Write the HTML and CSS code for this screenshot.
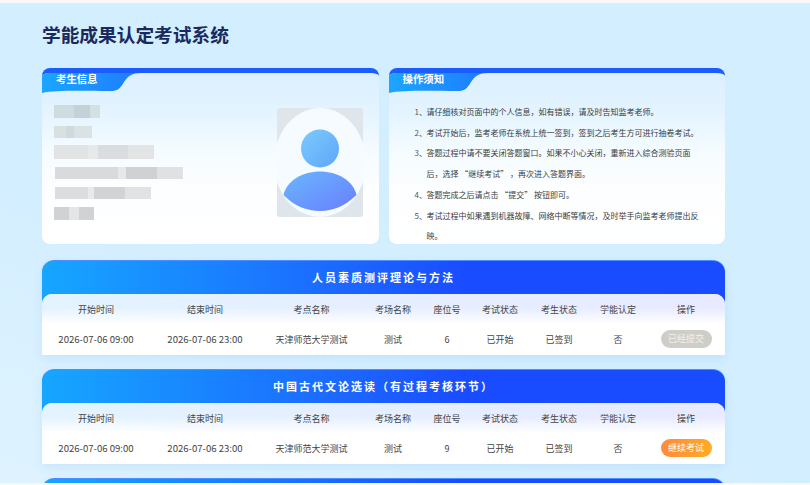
FILE: index.html
```html
<!DOCTYPE html>
<html lang="zh-CN">
<head>
    <meta charset="UTF-8">
    <meta name="viewport" content="width=device-width, initial-scale=1.0">
    <title>学能成果认定考试系统</title>
    <link rel="stylesheet" href="styles.css">
</head>
<body>
    <div class="page">
        <h1 class="page-title">学能成果认定考试系统</h1>

        <div class="info-row">
            <div class="panel">
                <div class="panel-tab">
                    <svg class="tab-shape" width="100" height="26" viewBox="0 0 100 26">
                        <defs>
                            <linearGradient id="tabFill" x1="0" y1="0" x2="1" y2="0">
                                <stop offset="0" stop-color="#1ba6ff"/>
                                <stop offset="1" stop-color="#1e7bff"/>
                            </linearGradient>
                        </defs>
                        <path d="M0 25 V5 H99 C90 5 86 8 82 14 C78 21 75 23 69 23 C40 23 14 22 0 25Z" fill="url(#tabFill)"/>
                    </svg>
                    <span class="tab-text">考生信息</span>
                </div>
                <div class="student-body">
                    <div class="student-lines">
                        <div class="mosaic mosaic-1"></div>
                        <div class="mosaic mosaic-2"></div>
                        <div class="mosaic mosaic-3"></div>
                        <div class="mosaic mosaic-4"></div>
                        <div class="mosaic mosaic-5"></div>
                        <div class="mosaic mosaic-6"></div>
                    </div>
                    <svg class="avatar" width="86" height="109" viewBox="0 0 86 109">
                        <defs>
                            <linearGradient id="headFill" x1="0" y1="0" x2="1" y2="1">
                                <stop offset="0" stop-color="#7ccbff"/>
                                <stop offset="1" stop-color="#5ea6f6"/>
                            </linearGradient>
                            <linearGradient id="bodyFill" x1="0" y1="0" x2="1" y2="1">
                                <stop offset="0" stop-color="#69b8fd"/>
                                <stop offset="1" stop-color="#6a7dff"/>
                            </linearGradient>
                        </defs>
                        <rect width="86" height="109" rx="3" fill="#dfe6eb"/>
                        <ellipse cx="43" cy="54.5" rx="46" ry="54.5" fill="#f5fbff"/>
                        <circle cx="43" cy="40.5" r="19" fill="url(#headFill)"/>
                        <path d="M6.5 87 C10 72 26 63.5 43 63.5 C60 63.5 76 72 79.5 87 C68 98 56 103 43 103 C30 103 17 98 6.5 87Z" fill="url(#bodyFill)"/>
                    </svg>
                </div>
            </div>

            <div class="panel">
                <div class="panel-tab">
                    <svg class="tab-shape" width="100" height="26" viewBox="0 0 100 26">
                        <path d="M0 25 V5 H99 C90 5 86 8 82 14 C78 21 75 23 69 23 C40 23 14 22 0 25Z" fill="url(#tabFill)"/>
                    </svg>
                    <span class="tab-text">操作须知</span>
                </div>
                <ol class="notice-list">
                    <li><span class="notice-num">1、</span><span>请仔细核对页面中的个人信息，如有错误，请及时告知监考老师。</span></li>
                    <li><span class="notice-num">2、</span><span>考试开始后，监考老师在系统上统一签到，签到之后考生方可进行抽卷考试。</span></li>
                    <li><span class="notice-num">3、</span><span>答题过程中请不要关闭答题窗口。如果不小心关闭，重新进入综合测验页面后，选择 “继续考试” ，再次进入答题界面。</span></li>
                    <li><span class="notice-num">4、</span><span>答题完成之后请点击 “提交” 按钮即可。</span></li>
                    <li><span class="notice-num">5、</span><span>考试过程中如果遇到机器故障、网络中断等情况，及时举手向监考老师提出反映。</span></li>
                </ol>
            </div>
        </div>

        <div class="course">
            <div class="course-title">人员素质测评理论与方法</div>
            <table class="course-table">
                <colgroup>
                    <col class="col-a"><col class="col-b"><col class="col-c"><col class="col-d"><col class="col-e"><col class="col-f"><col class="col-g"><col class="col-h"><col class="col-i">
                </colgroup>
                <thead>
                    <tr>
                        <th>开始时间</th><th>结束时间</th><th>考点名称</th><th>考场名称</th><th>座位号</th><th>考试状态</th><th>考生状态</th><th>学能认定</th><th>操作</th>
                    </tr>
                </thead>
                <tbody>
                    <tr>
                        <td class="cell-time">2026-07-06 09:00</td><td class="cell-time">2026-07-06 23:00</td><td>天津师范大学测试</td><td>测试</td><td>6</td><td>已开始</td><td>已签到</td><td>否</td>
                        <td><button class="btn btn-done">已经提交</button></td>
                    </tr>
                </tbody>
            </table>
        </div>

        <div class="course">
            <div class="course-title">中国古代文论选读（有过程考核环节）</div>
            <table class="course-table">
                <colgroup>
                    <col class="col-a"><col class="col-b"><col class="col-c"><col class="col-d"><col class="col-e"><col class="col-f"><col class="col-g"><col class="col-h"><col class="col-i">
                </colgroup>
                <thead>
                    <tr>
                        <th>开始时间</th><th>结束时间</th><th>考点名称</th><th>考场名称</th><th>座位号</th><th>考试状态</th><th>考生状态</th><th>学能认定</th><th>操作</th>
                    </tr>
                </thead>
                <tbody>
                    <tr>
                        <td class="cell-time">2026-07-06 09:00</td><td class="cell-time">2026-07-06 23:00</td><td>天津师范大学测试</td><td>测试</td><td>9</td><td>已开始</td><td>已签到</td><td>否</td>
                        <td><button class="btn btn-go">继续考试</button></td>
                    </tr>
                </tbody>
            </table>
        </div>

        <div class="course course-cut"></div>
    </div>
</body>
</html>
```

FILE: styles.css
```css
*{
    margin: 0;
    padding: 0;
    box-sizing: border-box;
    font-family: "Noto Sans CJK SC", "Liberation Sans", sans-serif;
}
html, body{
    height: 485px;
    overflow: hidden;
}
body{
    background-color: #f8f8f6;
    padding: 3px 0 2px;
}
.page{
    height: 480px;
    overflow: hidden;
    padding: 0 85px 0 42px;
    background: linear-gradient(200deg, #d3eeff 0%, #d3eeff 60%, #dff3ff 100%);
}
.page-title{
    font-size: 18.7px;
    line-height: 26px;
    font-weight: 700;
    color: #1b2a5c;
    margin-top: 18px;
}

/* top two panels */
.info-row{
    display: flex;
    gap: 10px;
    margin-top: 21px;
}
.panel{
    position: relative;
    flex: 1;
    height: 176px;
    border-radius: 8px;
    background: linear-gradient(180deg, #dbefff 0, #e4f4ff 40px, #f5fcff 80px, #fdfeff 120px, #fff 100%);
    border-top: 5px solid #1a5cff;
    overflow: hidden;
}
.panel-tab{
    position: absolute;
    left: 0;
    top: -5px;
    width: 100px;
    height: 26px;
}
.tab-shape{
    display: block;
}
.tab-text{
    position: absolute;
    left: 14px;
    top: 3px;
    font-size: 10.4px;
    line-height: 16px;
    font-weight: 700;
    color: #fff;
}
.student-body{
    display: flex;
    justify-content: space-between;
    padding: 32px 16px 0 12px;
}
.student-lines{
    display: flex;
    flex-direction: column;
    gap: 8px;
}
.avatar{
    display: block;
    margin-top: 3px;
}
.mosaic{
    height: 12px;
}
.mosaic-1{
    width: 46px;
    height: 13px;
    background: linear-gradient(90deg, #cfdcdf 20px, #c3d2d6 20px 36px, #d5e0e3 36px);
}
.mosaic-2{
    width: 38px;
    background: linear-gradient(90deg, #d9e0e2 12px, #cfdadf 12px 20px, #dbe2e4 20px);
}
.mosaic-3{
    width: 100px;
    height: 14px;
    margin-top: -1px;
    background: linear-gradient(90deg, #e1e3e5 34px, #e6e8e9 34px 44px, #dadddf 44px 74px, #e2e4e6 74px);
}
.mosaic-4{
    width: 128px;
    margin-left: 1px;
    background: linear-gradient(90deg, #d9dadc 63px, #e6e8e9 63px 71px, #d0d1d2 71px 102px, #dfe1e3 102px);
}
.mosaic-5{
    width: 96px;
    margin-left: 1px;
    background: linear-gradient(90deg, #dcdddf 33px, #e9eaea 33px 39px, #d2d3d3 39px 70px, #e1e2e4 70px);
}
.mosaic-6{
    width: 40px;
    height: 13px;
    background: linear-gradient(90deg, #d1d2d4 15px, #e4e5e6 15px 25px, #d1d2d4 25px);
}

/* notice list */
.notice-list{
    list-style: none;
    padding: 29px 0 0 26px;
    width: 316px;
    font-size: 8px;
    line-height: 20.7px;
    color: #3a3a3a;
}
.notice-list li{
    display: flex;
}
.notice-num{
    flex: none;
    width: 12px;
    color: #555;
}

/* course cards */
.course{
    margin-top: 14.6px;
    border-radius: 12px 12px 0 0;
    background: linear-gradient(90deg, #16a6ff 0%, #1c66ff 45%, #1a4cff 62%, #1a4cff 100%);
    border-top: 1px solid #4a8fff;
    overflow: hidden;
    box-shadow: 0 4px 10px rgba(90, 160, 230, 0.15);
}
.info-row + .course{
    margin-top: 16px;
}
.course-cut{
    height: 30px;
}
.course-title{
    height: 33px;
    line-height: 33px;
    text-align: center;
    font-size: 11px;
    font-weight: 700;
    letter-spacing: 2px;
    color: #fff;
}
.course-table{
    width: 100%;
    table-layout: fixed;
    border-collapse: separate;
    border-spacing: 0;
    font-size: 9px;
    color: #444;
    background: #fff;
    border-radius: 10px 10px 0 0;
    overflow: hidden;
}
.col-a{ width: 108px; }
.col-b{ width: 110px; }
.col-c{ width: 103px; }
.col-d{ width: 60px; }
.col-e{ width: 48px; }
.col-f{ width: 58px; }
.col-g{ width: 60px; }
.col-h{ width: 58px; }
.col-i{ width: 78px; }
.course-table thead tr{
    background: linear-gradient(180deg, rgba(255, 255, 255, 0) 45%, #fff 100%), linear-gradient(90deg, #e3f3ff, #e8eaff);
}
.course-table th{
    height: 30px;
    font-weight: 400;
    color: #444;
}
.course-table td{
    height: 30.5px;
    text-align: center;
}
.course-table .cell-time{
    font-size: 9.6px;
}
.btn{
    display: inline-block;
    vertical-align: middle;
    width: 51px;
    height: 18px;
    border: none;
    border-radius: 9px;
    font-size: 9px;
    line-height: 18px;
    color: #fff;
}
.btn-done{
    background-color: #cfcdc7;
    color: #f3f2ef;
}
.btn-go{
    background: linear-gradient(90deg, #ff8a3c, #ffac24);
}
```
